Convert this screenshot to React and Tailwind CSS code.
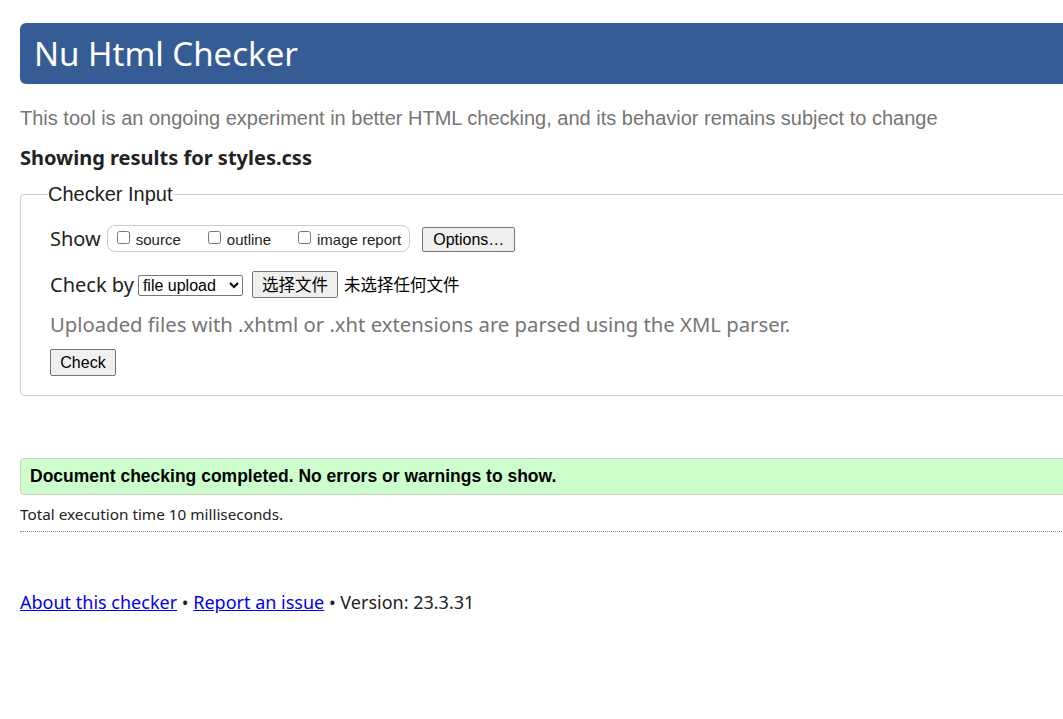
import React from "react";

const seg = { fontFamily: '"Noto Sans", "Open Sans", sans-serif' };

export default function App() {
  return (
    <div className="w-full overflow-hidden bg-white min-h-[719px] text-[#222]" style={seg}>
      <div className="w-[1120px] pl-5 pt-[23px]">
        {/* header */}
        <div className="h-[61px] bg-[#365c95] rounded-l-[6px] flex items-center pl-[14px]">
          <h1 className="text-[33px] text-white leading-none font-normal font-['Noto_Sans',sans-serif]">
            Nu Html Checker
          </h1>
        </div>

        <p className="mt-[22px] text-[20px] leading-6 text-[#757575] font-['Liberation_Sans',Arial,sans-serif]">
          This tool is an ongoing experiment in better HTML checking, and its behavior remains subject to change
        </p>

        <h2 className="mt-[16px] text-[20px] leading-6 font-bold text-[#222]">
          Showing results for styles.css
        </h2>

        {/* checker input */}
        <fieldset className="mt-[12px] border border-[#cccccc] rounded-[4px] pl-[29px] pb-[18px] pt-[18px] h-[214px]">
          <legend className="text-[20px] leading-6 -ml-[2px] text-[#222] font-['Liberation_Sans',Arial,sans-serif]">
            Checker Input
          </legend>

          <div className="flex items-center h-[27px] mt-[1px]">
            <span className="text-[20px] leading-6 mr-[6px]">Show</span>
            <div className="flex items-center h-[27px] border border-[#cccccc] rounded-[8px] pl-[9px] pr-[8px] font-['Liberation_Sans',Arial,sans-serif] text-[15px]">
              <label className="flex items-center mr-[27px]">
                <input type="checkbox" className="w-[13px] h-[13px] m-0 mr-[6px] -mt-[2px]" />
                <span className="pt-[4px]">source</span>
              </label>
              <label className="flex items-center mr-[27px]">
                <input type="checkbox" className="w-[13px] h-[13px] m-0 mr-[6px] -mt-[2px]" />
                <span className="pt-[4px]">outline</span>
              </label>
              <label className="flex items-center">
                <input type="checkbox" className="w-[13px] h-[13px] m-0 mr-[6px] -mt-[2px]" />
                <span className="pt-[4px]">image report</span>
              </label>
            </div>
            <button className="ml-[12px] h-[25px] mt-[2px] px-[10px] bg-[#efefef] border border-[#767676] rounded-[2px] text-[16px] leading-none text-black font-['Liberation_Sans',Arial,sans-serif]">
              Options…
            </button>
          </div>

          <div className="flex items-center h-[27px] mt-[19px]">
            <span className="text-[20px] leading-6 mr-[4px]">Check by</span>
            <select className="h-[21px] w-[105px] mt-[2px] border border-[#767676] rounded-[2px] text-[16px] leading-none text-black bg-white font-['Liberation_Sans',Arial,sans-serif]">
              <option>file upload</option>
            </select>
            <button className="ml-[9px] h-[27px] px-[9px] bg-[#efefef] border border-[#767676] rounded-[2px] text-[16.5px] leading-none text-black font-['Noto_Sans_CJK_SC',sans-serif]">
              选择文件
            </button>
            <span className="ml-[6px] text-[16.5px] text-black font-['Noto_Sans_CJK_SC',sans-serif]">
              未选择任何文件
            </span>
          </div>

          <p className="mt-[14px] text-[20.3px] leading-6 text-[#757575]">
            Uploaded files with .xhtml or .xht extensions are parsed using the XML parser.
          </p>

          <button className="mt-[13px] h-[27px] w-[66px] bg-[#efefef] border border-[#767676] rounded-[2px] text-[16px] leading-none text-black font-['Liberation_Sans',Arial,sans-serif]">
            Check
          </button>
        </fieldset>

        {/* result */}
        <div className="mt-[62px] h-[37px] bg-[#ccffcc] border border-[#cccccc] rounded-l-[4px] flex items-center pl-[9px]">
          <p className="text-[17.5px] font-bold text-black font-['Liberation_Sans',Arial,sans-serif]">
            Document checking completed. No errors or warnings to show.
          </p>
        </div>

        <p className="mt-[9px] text-[15.3px] leading-5 text-[#222]">Total execution time 10 milliseconds.</p>
        <div className="mt-[7px] border-b border-dotted border-[#888]"></div>

        {/* footer */}
        <p className="mt-[58px] text-[18px] leading-6 text-[#222]">
          <a href="#" className="text-[#0000ee] underline">About this checker</a>
          {" • "}
          <a href="#" className="text-[#0000ee] underline">Report an issue</a>
          {" • Version: 23.3.31"}
        </p>
      </div>
    </div>
  );
}
